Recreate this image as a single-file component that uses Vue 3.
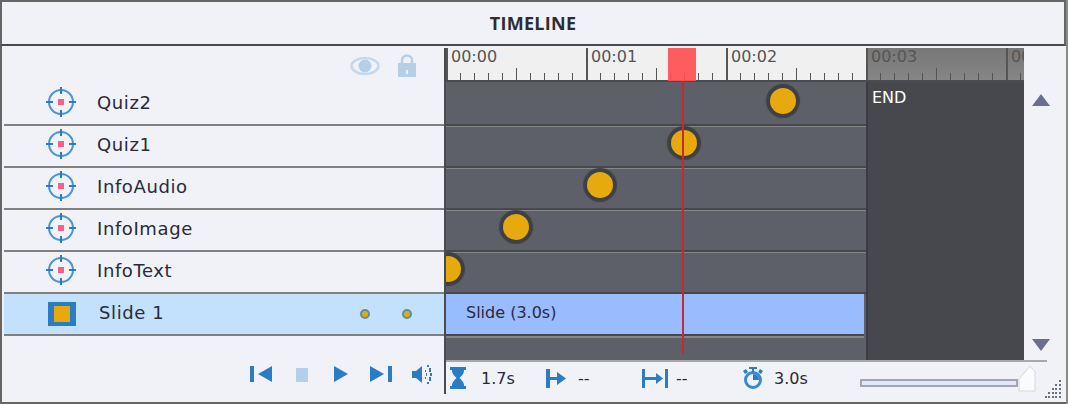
<template>
  <div class="panel">
    <div class="title">TIMELINE</div>
    <div class="body">
      <div class="layers">
        <div class="layers-head">
          <svg class="eye" width="30" height="20" viewBox="0 0 30 20">
            <ellipse cx="15" cy="10" rx="13.5" ry="8" fill="none" stroke="#c4d9ee" stroke-width="2.500" />
            <circle cx="15" cy="10" r="6.500" fill="#b5cfe9" />
          </svg>
          <svg class="lock" width="18" height="23" viewBox="0 0 18 23">
            <path d="M4 10V6.500a5 5 0 0 1 10 0V10" fill="none" stroke="#b5cfe9" stroke-width="2.500" />
            <path d="M0 9h18v14H0z M8 16v4h2v-4z" fill="#b5cfe9" fill-rule="evenodd" />
          </svg>
        </div>
        <div v-for="name in layers" :key="name" class="layer">
          <svg class="target" width="30" height="30" viewBox="0 0 30 30">
            <circle cx="15" cy="15" r="12" fill="none" stroke="#4a94d4" stroke-width="2" />
            <path d="M15 0v7M15 23v7M0 15h7M23 15h7" stroke="#2a7cc4" stroke-width="2" />
            <rect x="12" y="12" width="6" height="6" fill="#fb5f86" />
          </svg>
          <span class="layer-name">{{ name }}</span>
        </div>
        <div class="layer slide-layer">
          <div class="slide-icon"><div class="slide-icon-inner"></div></div>
          <span class="layer-name">Slide 1</span>
          <div class="dots">
            <span class="dot"></span>
            <span class="dot"></span>
          </div>
        </div>
        <div class="controls">
          <svg class="c-prev" width="22" height="16" viewBox="0 0 22 16">
            <path d="M0 0h4v16H0zM22 0v16L8 8z" fill="#2a7cc4" />
          </svg>
          <svg class="c-stop" width="12" height="14" viewBox="0 0 12 14">
            <rect width="12" height="14" fill="#b5cfe9" />
          </svg>
          <svg class="c-play" width="14" height="16" viewBox="0 0 14 16">
            <path d="M0 0v16l14-8z" fill="#2a7cc4" />
          </svg>
          <svg class="c-next" width="22" height="16" viewBox="0 0 22 16">
            <path d="M0 0v16l14-8zM18 0h4v16h-4z" fill="#2a7cc4" />
          </svg>
          <svg class="c-sound" width="20" height="19" viewBox="0 0 20 19">
            <path d="M0 6h4l6-5v17l-6-5H0z" fill="#2a7cc4" />
            <path d="M13 5h1v3h1v3h-1v3h-1v-2h1V7h-1zM15 0h2v2h-2zM17 3h2v4h-2zM18 8h2v3h-2zM17 12h2v4h-2zM15 17h2v2h-2z" fill="#2a7cc4" />
          </svg>
        </div>
      </div>

      <div class="timeline">
        <div class="ruler">
          <div class="ruler-end"></div>
          <span
            v-for="t in ticks"
            :key="t.x"
            class="tick"
            :class="t.kind"
            :style="{ left: t.x + 'px' }"
          ></span>
          <span
            v-for="(l, i) in rulerLabels"
            :key="l"
            class="ruler-label"
            :style="{ left: i * 140 + 5 + 'px' }"
          >{{ l }}</span>
        </div>

        <div class="area">
          <div class="tracks">
            <div class="track" v-for="(x, i) in markers" :key="i">
              <span class="marker" :style="{ left: x + 'px' }"></span>
            </div>
            <div class="slide-bar">Slide (3.0s)</div>
          </div>
          <div class="end-zone">END</div>
          <div class="scroller">
            <span class="arrow up"></span>
            <span class="arrow down"></span>
          </div>
        </div>

        <div class="playhead"></div>
        <div class="playhead-block"></div>

        <div class="stats">
          <div class="stat s1">
            <svg width="16" height="22" viewBox="0 0 16 22">
              <path d="M0 0h16v3h-2v1q0 3-4.500 7q4.500 4 4.500 7v1h2v3H0v-3h2v-1q0-3 4.500-7Q2 7 2 4V3H0z" fill="#2a7cc4" />
            </svg>
            <span class="stat-text t1">1.7s</span>
          </div>
          <div class="stat s2">
            <svg width="20" height="19" viewBox="0 0 20 19">
              <path d="M0 0h4v19H0zM4 8h7V3l9 6.500-9 6.500v-5H4z" fill="#2a7cc4" />
            </svg>
            <span class="stat-text t2">--</span>
          </div>
          <div class="stat s3">
            <svg width="26" height="19" viewBox="0 0 26 19">
              <path d="M0 0h3v19H0zM23 0h3v19h-3zM3 8h11V4l7 5.500-7 5.500v-4H3z" fill="#2a7cc4" />
            </svg>
            <span class="stat-text t3">--</span>
          </div>
          <div class="stat s4">
            <svg width="22" height="22" viewBox="0 0 22 22">
              <circle cx="11" cy="13" r="7.500" fill="none" stroke="#3a8ad0" stroke-width="3" />
              <path d="M7 0h8v2h-3v3h-2V2H7zM1 4l3-2 2 3-3 2zM21 4l-3-2-2 3 3 2z" fill="#2a7cc4" />
              <path d="M11 13V7a6 6 0 0 1 6 6z" fill="#2a7cc4" />
            </svg>
            <span class="stat-text t4">3.0s</span>
          </div>
          <div class="slider">
            <svg class="handle" width="18" height="28" viewBox="0 0 18 28">
              <path d="M1 14 12 1l5 6v19H1z" fill="#fbfbfd" stroke="#d6d8de" stroke-width="1" />
            </svg>
          </div>
        </div>
      </div>
    </div>
    <svg class="grip" width="18" height="18" viewBox="0 0 18 18">
      <path
        d="M14 0h2v2h-2zM10 4h2v2h-2zM14 4h2v2h-2zM7 8h2v2H7zM10 8h2v2h-2zM14 8h2v2h-2zM3 12h2v2H3zM7 12h2v2H7zM10 12h2v2h-2zM14 12h2v2h-2zM0 16h2v2H0zM3 16h2v2H3zM7 16h2v2H7zM10 16h2v2h-2zM14 16h2v2h-2z"
        fill="#6b6f7c"
      />
    </svg>
  </div>
</template>

<script setup>
const layers = ['Quiz2', 'Quiz1', 'InfoAudio', 'InfoImage', 'InfoText']
const rulerLabels = ['00:00', '00:01', '00:02', '00:03', '00:04']

// left of each marker, inside the track
const markers = [324, 225, 141, 57, -11]

const ticks = []
for (let i = 0; i * 14 < 578; i++) {
  let kind = 'minor'
  if (i % 10 === 0) kind = 'major'
  else if (i % 5 === 0) kind = 'half'
  ticks.push({ x: i * 14, kind })
}
</script>

<style>
html,
body {
  margin: 0;
  background: #f0f2f7;
}
</style>

<style scoped>
.panel {
  position: relative;
  width: 1068px;
  height: 404px;
  box-sizing: border-box;
  border-right: 2px solid #8a8a8a;
  display: flex;
  flex-direction: column;
  background: #f0f2f7;
  color: #222;
  font-family: "DejaVu Sans", sans-serif;
  overflow: hidden;
}

.title {
  height: 46px;
  box-sizing: border-box;
  border: 2px solid #666;
  border-bottom-color: #4a4a4a;
  display: flex;
  align-items: center;
  justify-content: center;
  font-family: "Open Sans", sans-serif;
  font-size: 18px;
  font-weight: 700;
  letter-spacing: 0.3px;
  color: #2c2c34;
}

.body {
  flex: 1;
  display: flex;
  border-left: 2px solid #666;
  border-bottom: 2px solid #666;
}

.layers {
  width: 440px;
  margin-left: 2px;
  display: flex;
  flex-direction: column;
}

.layers-head {
  height: 38px;
  box-sizing: border-box;
  padding: 8px 28px 0 0;
  display: flex;
  justify-content: flex-end;
  align-items: flex-start;
  gap: 18px;
}

.eye {
  margin-top: 2px;
}

.layer {
  height: 42px;
  box-sizing: border-box;
  border-bottom: 2px solid #808080;
  display: flex;
  align-items: center;
  padding: 0 32px 4px 42px;
}

.target {
  flex: none;
}

.layer-name {
  margin-left: 21px;
  font-size: 18px;
  letter-spacing: 0.6px;
  color: #2a2a3a;
}

.slide-layer {
  background: #c3e1fc;
  padding: 0 32px 4px 44px;
}

.slide-icon {
  width: 28px;
  height: 24px;
  margin-top: 4px;
  background: #2a7cc4;
  display: flex;
  align-items: center;
  justify-content: center;
}

.slide-icon-inner {
  width: 16px;
  height: 16px;
  background: #e6a90e;
}

.slide-layer .layer-name {
  margin-left: 23px;
}

.dots {
  margin: 4px 0 0 auto;
  display: flex;
  gap: 32px;
}

.dot {
  width: 6px;
  height: 6px;
  border: 2px solid #5a8fa8;
  border-radius: 50%;
  background: #e6a90e;
}

.controls {
  flex: 1;
  display: flex;
  align-items: flex-start;
  padding: 29px 0 0 246px;
}

.c-prev {
  margin: 1px 24px 0 0;
}

.c-stop {
  margin: 3px 26px 0 0;
}

.c-play {
  margin: 1px 22px 0 0;
}

.c-next {
  margin: 1px 20px 0 0;
}

.timeline {
  position: relative;
  width: 620px;
  margin: 2px 0 8px;
  border-left: 2px solid #4a4b50;
  display: flex;
  flex-direction: column;
}

.ruler {
  position: relative;
  width: 578px;
  height: 34px;
  box-sizing: border-box;
  background: #f0f0f0;
  border-bottom: 2px solid #4a4b50;
  overflow: hidden;
}

.ruler-end {
  position: absolute;
  left: 420px;
  top: 0;
  right: 0;
  bottom: 0;
  background: linear-gradient(#777, #868686);
}

.tick {
  position: absolute;
  bottom: 0;
  width: 1px;
  height: 7px;
  background: #555;
}

.tick.half {
  height: 12px;
}

.tick.major {
  height: 32px;
  width: 2px;
  background: #555;
}

.ruler-label {
  position: absolute;
  top: -1px;
  font-size: 16px;
  line-height: 19px;
  color: #555;
}

.area {
  height: 278px;
  display: flex;
}

.tracks {
  width: 420px;
  background: #5d6068;
  overflow: hidden;
}

.track {
  position: relative;
  height: 42px;
  box-sizing: border-box;
  border-bottom: 2px solid #47484d;
}

.track:first-child {
  height: 44px;
}

.track + .track {
  border-top: 1px solid #85878b;
}

.marker {
  position: absolute;
  top: 4px;
  width: 26px;
  height: 26px;
  border-radius: 50%;
  background: #e6a90e;
  box-shadow: 0 0 1px 4px #3f4045;
}

.track + .track .marker {
  top: 3px;
}

.track:first-child .marker {
  top: 6px;
}

.slide-bar {
  width: 418px;
  height: 40px;
  box-sizing: border-box;
  background: #99bbff;
  padding: 0 0 4px 20px;
  display: flex;
  align-items: center;
  font-size: 16px;
  color: #2a2a3a;
  box-shadow: 0 2px 0 #47484d, 0 4px 0 #85878b;
}

.end-zone {
  width: 158px;
  box-sizing: border-box;
  background: #47484d;
  border-left: 2px solid #3a3b40;
  padding: 6px 0 0 4px;
  font-size: 16px;
  line-height: 20px;
  color: #fff;
}

.scroller {
  width: 42px;
  padding: 12px 0 9px 8px;
  box-sizing: border-box;
  display: flex;
  flex-direction: column;
  justify-content: space-between;
}

.arrow {
  width: 0;
  height: 0;
  border-left: 9px solid transparent;
  border-right: 9px solid transparent;
}

.arrow.up {
  border-bottom: 12px solid #6b6f8e;
}

.arrow.down {
  border-top: 12px solid #6b6f8e;
}

.playhead {
  position: absolute;
  left: 236px;
  top: 32px;
  width: 2px;
  height: 274px;
  background: #c8282e;
}

.playhead-block {
  position: absolute;
  left: 222px;
  top: 0;
  width: 28px;
  height: 33px;
  background: rgba(255, 80, 84, 0.92);
}

.stats {
  flex: 1;
  width: 601px;
  box-sizing: border-box;
  border-top: 2px solid #a8a8a8;
  display: flex;
  align-items: center;
  padding-left: 4px;
  font-size: 16px;
  color: #2a2a3a;
}

.stat {
  display: flex;
  align-items: center;
}

.s1 {
  width: 96px;
}

.s2 {
  width: 96px;
}

.s3 {
  width: 100px;
}

.s4 {
  width: 118px;
}

.t1 {
  margin-left: 15px;
}

.t2 {
  margin-left: 12px;
}

.t3 {
  margin-left: 8px;
}

.t4 {
  margin-left: 10px;
}

.slider {
  position: relative;
  width: 158px;
  height: 8px;
  margin-top: 10px;
  box-sizing: border-box;
  border: 2px solid #a2a6b4;
  background: #e2e8f6;
}

.handle {
  position: absolute;
  left: 156px;
  top: -16px;
}

.grip {
  position: absolute;
  right: 3px;
  bottom: 6px;
}
</style>
